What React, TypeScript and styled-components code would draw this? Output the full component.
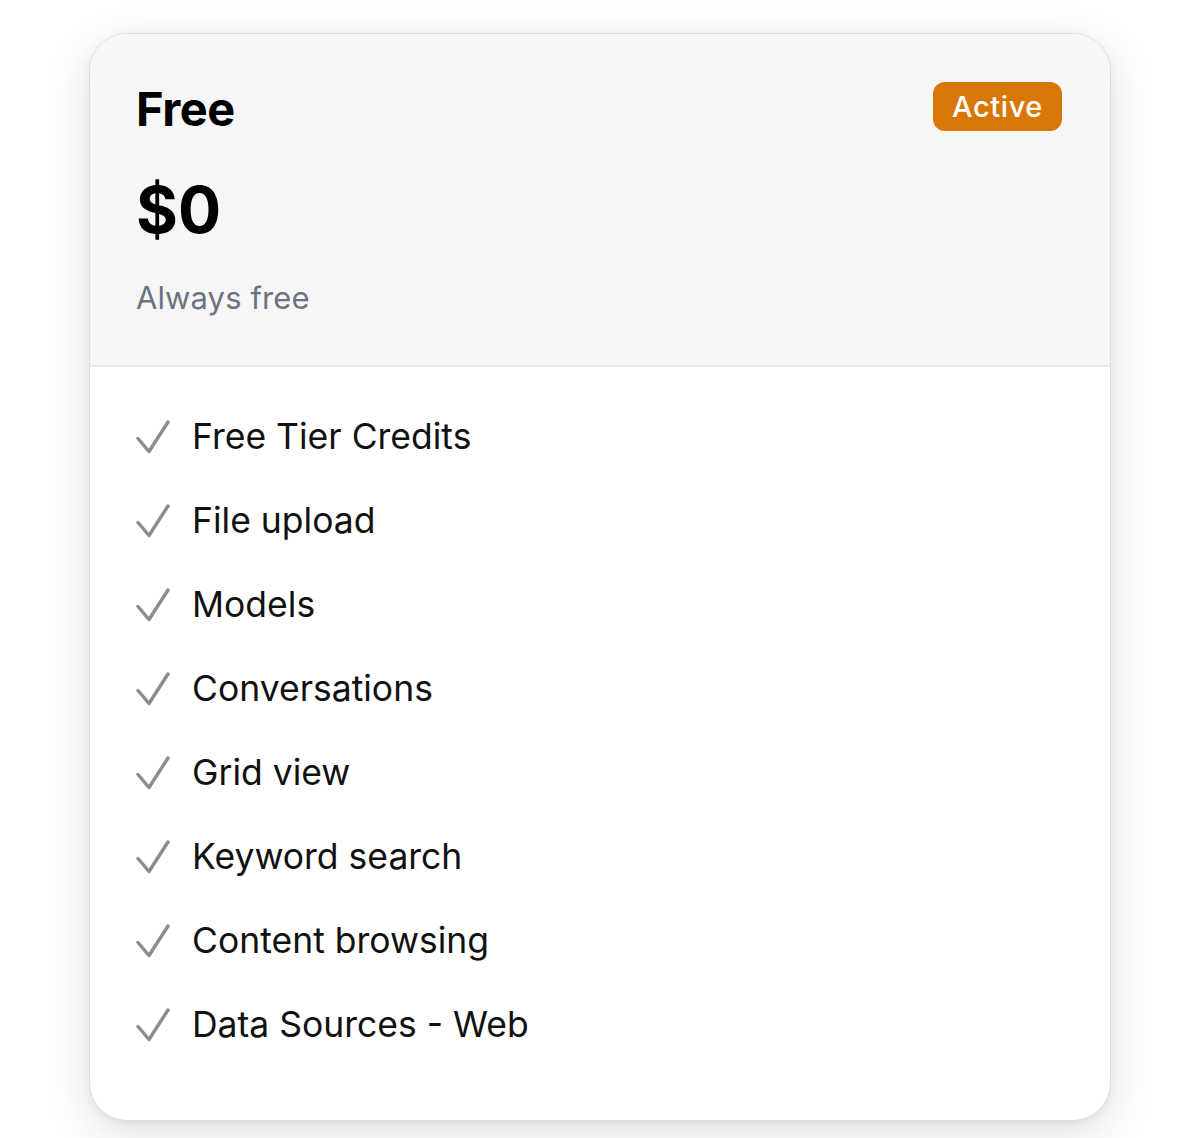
import styled, { createGlobalStyle } from 'styled-components'

const GlobalStyle = createGlobalStyle`
  html, body {
    margin: 0;
    background: #ffffff;
    font-family: Inter, "Noto Sans", "Liberation Sans", sans-serif;
    -webkit-font-smoothing: antialiased;
  }
`

// ─── page ───
const Page = styled.div`
  padding: 33px 89px 18px;
  box-sizing: border-box;
  min-height: 1138px;
`

const Card = styled.div`
  background: #ffffff;
  border: 1.5px solid #dedede;
  border-radius: 38px;
  overflow: hidden;
  box-shadow: 0 12px 44px rgba(0, 0, 0, 0.13), 0 2px 8px rgba(0, 0, 0, 0.05);
`

// ─── header ───
const Header = styled.div`
  background: #f6f6f6;
  border-bottom: 2px solid #e9e9e9;
  padding: 47px 46px 47px;
`

const HeaderTop = styled.div`
  display: flex;
  justify-content: space-between;
  align-items: flex-start;
`

const Title = styled.h2`
  margin: 0;
  font-size: 47px;
  line-height: 56px;
  font-weight: 700;
  color: #000;
  letter-spacing: -0.5px;
`

const Badge = styled.span`
  margin: 1px 2px 0 0;
  background: #d97706;
  color: #fff;
  font-size: 29px;
  line-height: 49px;
  padding: 0 19px;
  border-radius: 12px;
  font-weight: 500;
  letter-spacing: 0.6px;
`

const Price = styled.div`
  margin-top: 33px;
  font-size: 64px;
  line-height: 80px;
  font-weight: 700;
  color: #000;
`

const Subtitle = styled.div`
  margin-top: 28px;
  font-size: 31px;
  line-height: 40px;
  color: #6b7280;
  letter-spacing: 0.1px;
`

// ─── features ───
const List = styled.ul`
  list-style: none;
  margin: 0;
  padding: 28px 46px 53px;
`

const Item = styled.li`
  display: flex;
  align-items: center;
  gap: 22px;
  height: 84px;
  font-size: 35.5px;
  line-height: 84px;
  color: #111;
`

const Check = () => (
  <svg width="34" height="34" viewBox="0 0 34 34" fill="none">
    <polyline
      points="2,18.5 13,31.5 32,2"
      stroke="#8c8c8c"
      strokeWidth="3.4"
      strokeLinecap="round"
      strokeLinejoin="round"
    />
  </svg>
)

const features = [
  'Free Tier Credits',
  'File upload',
  'Models',
  'Conversations',
  'Grid view',
  'Keyword search',
  'Content browsing',
  'Data Sources - Web',
]

export default function App() {
  return (
    <>
      <GlobalStyle />
      <Page>
        <Card>
          <Header>
            <HeaderTop>
              <Title>Free</Title>
              <Badge>Active</Badge>
            </HeaderTop>
            <Price>$0</Price>
            <Subtitle>Always free</Subtitle>
          </Header>
          <List>
            {features.map(f => (
              <Item key={f}>
                <Check />
                {f}
              </Item>
            ))}
          </List>
        </Card>
      </Page>
    </>
  )
}
